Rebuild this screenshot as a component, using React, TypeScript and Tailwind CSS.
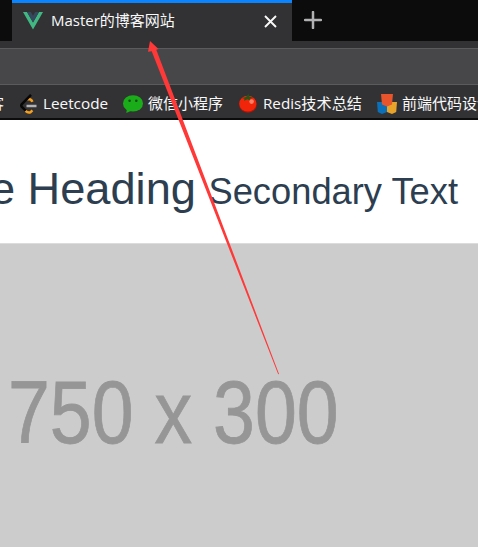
import type { ReactNode } from "react";

const uiFont = "font-['Open_Sans','Noto_Sans_CJK_SC',sans-serif]";

function VueIcon() {
  return (
    <svg width="20" height="18" viewBox="0 0 20 18">
      <path d="M0 0h4l6 10.5L16 0h4L10 17.5z" fill="#41b883" />
      <path d="M4 0h3.8L10 3.8 12.2 0H16l-6 10.5z" fill="#35495e" />
    </svg>
  );
}

function LeetcodeIcon() {
  return (
    <svg width="18" height="20" viewBox="0 0 18 20" fill="none" strokeWidth="2.5">
      <path d="M7 5.2l2-.3q2.6.3 3.3 3M5.5 16.8q2.7 2.6 5.2 1.3l1.7-1.7" stroke="#f9a01b" />
      <path d="M11 .8L1.9 10q-1.3 1.6.2 3.2l3.6 3.5" stroke="#070707" />
      <path d="M6.5 12h10" stroke="#b3b3b3" />
    </svg>
  );
}

function WechatIcon() {
  return (
    <svg width="20" height="18" viewBox="0 0 20 18">
      <ellipse cx="10" cy="8.4" rx="10" ry="8.2" fill="#1aad19" />
      <path d="M4 13l-.7 5 5-2.2z" fill="#1aad19" />
      <circle cx="6.6" cy="5.8" r="1.3" fill="#164b17" />
      <circle cx="13.3" cy="5.8" r="1.3" fill="#164b17" />
    </svg>
  );
}

function TomatoIcon() {
  return (
    <svg width="18" height="19" viewBox="0 0 18 19">
      <ellipse cx="9" cy="10.4" rx="8.8" ry="8.3" fill="#b51408" />
      <ellipse cx="8.8" cy="9.7" rx="8.5" ry="7.9" fill="#f02509" />
      <path d="M3 4.1l4-1L9.8 0l.6 2.8 4 1-3.4 1 .4 2-2.8-1.6L5 6.700l.5-2z" fill="#245616" />
      <circle cx="12.600" cy="7.600" r="2.300" fill="#ff8068" />
    </svg>
  );
}

function ShieldsIcon() {
  return (
    <svg width="20" height="20" viewBox="0 0 20 20">
      <path d="M0 8h10v10l-5 2-4.2-2z" fill="#0b70b8" />
      <path d="M10 8h10l-.8 10-4.2 2-5-2z" fill="#e8a32b" />
      <path d="M4 0h12l-1 10.5-5 2-5-2z" fill="#e8542b" />
    </svg>
  );
}

function Bookmark({ icon, children, size }: { icon: ReactNode; children: ReactNode; size: string }) {
  return (
    <div className={`flex shrink-0 items-center ${size}`}>
      <span className="shrink-0">{icon}</span>
      <span className="whitespace-nowrap">{children}</span>
    </div>
  );
}

export default function App() {
  return (
    <div className="relative flex h-[547px] w-[478px] flex-col overflow-hidden bg-white">
      <header className={`shrink-0 bg-[#323234] text-[15px] text-[#f9f9fa] ${uiFont}`}>
        <div className="flex h-12">
          <div className="h-[41px] w-3 bg-[#0c0c0d]" />
          <div className="flex h-[41px] w-[280px] items-center border-t-3 border-[#0a84ff] pr-[15px] pb-[3px] pl-[11px]">
            <VueIcon />
            <span className="ml-2 grow whitespace-nowrap">Master的博客网站</span>
            <svg className="mt-px" width="13" height="13" viewBox="0 0 13 13" stroke="#f9f9fa" strokeWidth="1.9">
              <path d="M1 1l11 11M12 1L1 12" />
            </svg>
          </div>
          <div className="flex h-[41px] grow items-center bg-[#0c0c0d] pb-0.5 pl-3">
            <svg width="18" height="18" viewBox="0 0 18 18" stroke="#b1b1b3" strokeWidth="2.5" strokeLinecap="round">
              <path d="M9 1v16M1 9h16" />
            </svg>
          </div>
        </div>
        <div className="h-[37px] border-y border-[#5b5b5d] bg-[#474749]" />
        <nav className="flex h-[35px] items-center overflow-hidden border-b-2 border-[#0c0c0d] pt-1">
          <div className="flex w-5 shrink-0">
            <span className="flex w-[4px] justify-end overflow-hidden">客</span>
          </div>
          <Bookmark icon={<LeetcodeIcon />} size="w-[103px] gap-[5px] text-[15.3px]">Leetcode</Bookmark>
          <Bookmark icon={<WechatIcon />} size="w-[116px] gap-[5px]">微信小程序</Bookmark>
          <Bookmark icon={<TomatoIcon />} size="w-[138px] gap-[6px] text-[15.2px]">Redis技术总结</Bookmark>
          <Bookmark icon={<ShieldsIcon />} size="gap-[5px]">前端代码设计</Bookmark>
        </nav>
      </header>
      <main className="flex grow flex-col font-['Liberation_Sans',Arial,sans-serif]">
        <h1 className="flex h-[123px] w-[458px] items-baseline justify-end pt-[42px] text-[45.2px] leading-[54px] whitespace-pre text-[#2c3e50]">
          Page Heading <small className="text-[36.3px]">Secondary Text</small>
        </h1>
        <div className="flex grow items-start overflow-hidden border-t border-[#dcdcdc] bg-[#ccc] pt-[118px] pl-2">
          <span className="origin-left scale-x-[0.846] text-[89px] leading-[100px] whitespace-nowrap text-[#969696] [-webkit-text-stroke:0.8px_#969696]">
            750 x 300
          </span>
        </div>
      </main>
      <svg className="absolute inset-0" width="478" height="547" viewBox="0 0 478 547">
        <path d="M150 41l8.5 8-2.2.7L279 374l-.8.3L151.700 51.200l-3.700.6z" fill="#ff3838" />
      </svg>
    </div>
  );
}
